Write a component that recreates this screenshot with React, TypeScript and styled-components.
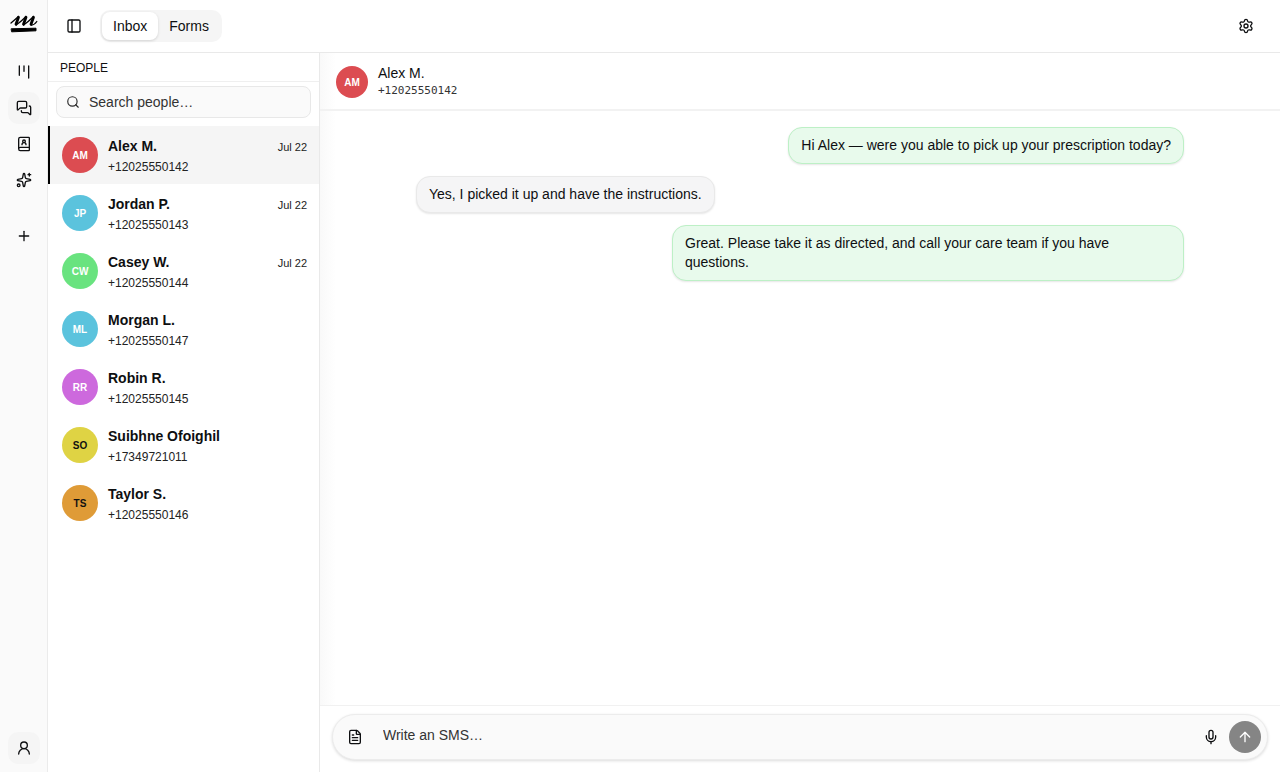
import React from "react";
import styled, { createGlobalStyle } from "styled-components";
import { ArrowUp, BookUser, FileText, Kanban, MessagesSquare, Mic, PanelLeft, Plus, Search, Settings, Sparkles, UserRound } from "lucide-react";

const GlobalStyle = createGlobalStyle`
  *, *::before, *::after { box-sizing: border-box; }
  body { margin: 0; font-family: "Liberation Sans", Arial, sans-serif; font-size: 14px; line-height: 20px; color: #0e0f11; background: #fff; }
  h1, h2, p, ul { margin: 0; padding: 0; }
  button, input { font: inherit; color: inherit; }
  button { border: 0; padding: 0; background: none; cursor: pointer; }
`;

const Shell = styled.div`
  display: flex;
  height: 100vh;
`;

const Rail = styled.nav`
  flex: none;
  display: flex;
  flex-direction: column;
  align-items: center;
  gap: 4px;
  width: 48px;
  padding: 8px 0;
  background: #fafafa;
  border-right: 1px solid #ebebeb;
`;

const Brand = styled.a`
  display: grid;
  place-items: center;
  height: 32px;
  margin-bottom: 12px;
  color: #000;
`;

const IconButton = styled.button<{ $active?: boolean }>`
  flex: none;
  display: grid;
  place-items: center;
  width: 32px;
  height: 32px;
  border-radius: 10px;
  background: ${(p) => (p.$active ? "#f5f5f5" : "transparent")};
`;

const RailGap = styled.div<{ $grow?: boolean }>`
  flex: ${(p) => (p.$grow ? "1" : "none")};
  height: 16px;
`;

const Main = styled.div`
  flex: 1;
  min-width: 0;
  display: flex;
  flex-direction: column;
`;

const TopBar = styled.header`
  flex: none;
  display: flex;
  align-items: center;
  height: 53px;
  padding: 0 18px 0 10px;
  border-bottom: 1px solid #e9e9e9;
`;

const Tabs = styled.div`
  display: flex;
  margin: 0 auto 0 10px;
  padding: 2px;
  border-radius: 10px;
  background: #f5f5f5;
`;

const Tab = styled.button<{ $active?: boolean }>`
  height: 28px;
  padding: 0 11px;
  border-radius: 8px;
  background: ${(p) => (p.$active ? "#fff" : "transparent")};
  box-shadow: ${(p) => (p.$active ? "0 1px 3px rgba(0, 0, 0, 0.14)" : "none")};
`;

const Body = styled.div`
  flex: 1;
  min-height: 0;
  display: flex;
`;

const People = styled.aside`
  flex: none;
  width: 272px;
  border-right: 1px solid #e9e9e9;
`;

const PeopleTitle = styled.h2`
  height: 29px;
  padding: 0 12px;
  font-size: 12px;
  line-height: 30px;
  font-weight: 500;
  color: #111;
  border-bottom: 1px solid #efefef;
`;

const SearchBox = styled.label`
  display: flex;
  align-items: center;
  gap: 9px;
  height: 32px;
  margin: 4px 8px 8px;
  padding: 0 9px;
  border: 1px solid #e8e8e8;
  border-radius: 8px;
  background: #fafafa;
  color: #2b2b2b;
`;

const TextInput = styled.input`
  flex: 1;
  min-width: 0;
  padding: 0;
  border: 0;
  outline: 0;
  background: transparent;
  &::placeholder { color: #333; opacity: 1; }
`;

const PersonList = styled.ul`
  list-style: none;
`;

const Person = styled.button<{ $active?: boolean }>`
  display: flex;
  align-items: center;
  gap: 10px;
  width: 100%;
  height: 58px;
  padding: 0 12px;
  text-align: left;
  border-left: 2px solid ${(p) => (p.$active ? "#000" : "transparent")};
  background: ${(p) => (p.$active ? "#f5f5f5" : "transparent")};
`;

const Avatar = styled.span<{ $color: string; $dark?: boolean; $size: number }>`
  flex: none;
  display: grid;
  place-items: center;
  width: ${(p) => p.$size}px;
  height: ${(p) => p.$size}px;
  padding-top: 2px;
  border-radius: 50%;
  font-size: 10px;
  line-height: 12px;
  font-weight: 700;
  background: ${(p) => p.$color};
  color: ${(p) => (p.$dark ? "#111" : "#fff")};
`;

const PersonText = styled.span`
  flex: 1;
  min-width: 0;
  padding-top: 2px;
`;

const PersonTop = styled.span`
  display: flex;
  align-items: baseline;
  justify-content: space-between;
  height: 22px;
  line-height: 22px;
`;

const PersonName = styled.span`
  font-weight: 700;
`;

const PersonDate = styled.time`
  font-size: 11px;
  color: #222;
`;

const PersonPhone = styled.span`
  display: block;
  font-size: 12px;
  line-height: 20px;
  color: #222;
`;

const Chat = styled.section`
  flex: 1;
  min-width: 0;
  display: flex;
  flex-direction: column;
  background: linear-gradient(to right, #f9f9f9, #fff 16px);
`;

const ChatHeader = styled.header`
  flex: none;
  display: flex;
  align-items: center;
  gap: 10px;
  height: 58px;
  padding: 2px 16px 0;
  border-bottom: 2px solid #f2f2f2;
`;

const ChatName = styled.h1`
  font-size: 14px;
  line-height: 18px;
  font-weight: 500;
`;

const ChatPhone = styled.p`
  font-family: "DejaVu Sans Mono", monospace;
  font-size: 11px;
  line-height: 18px;
  color: #333;
`;

const Thread = styled.div`
  flex: 1;
  min-height: 0;
  overflow: auto;
  display: flex;
  flex-direction: column;
  gap: 12px;
  padding: 16px 10%;
`;

const Bubble = styled.p<{ $own?: boolean }>`
  align-self: ${(p) => (p.$own ? "flex-end" : "flex-start")};
  max-width: 512px;
  padding: 8px 12px;
  line-height: 19px;
  border: 1px solid ${(p) => (p.$own ? "#bdf0c6" : "#e9e9e9")};
  border-radius: 14px;
  background: ${(p) => (p.$own ? "#e8faec" : "#f5f5f6")};
  box-shadow: 0 1px 2px rgba(0, 0, 0, 0.1);
`;

const Footer = styled.footer`
  flex: none;
  padding: 8px 12px 12px;
  background: #fff;
  border-top: 1px solid #f1f1f1;
`;

const Composer = styled.form`
  display: flex;
  align-items: center;
  height: 46px;
  padding: 0 6px;
  border: 1px solid #ececec;
  border-radius: 23px;
  background: #fafafa;
  box-shadow: 0 1px 3px rgba(0, 0, 0, 0.14);
`;

const MessageInput = styled(TextInput)`
  height: 32px;
  margin: 0 12px;
  padding-bottom: 4px;
`;

const SendButton = styled(IconButton)`
  margin-left: 2px;
  border-radius: 50%;
  background: #858585;
  color: #fff;
`;

const people = [
  { initials: "AM", name: "Alex M.", phone: "+12025550142", date: "Jul 22", color: "#dc4c51" },
  { initials: "JP", name: "Jordan P.", phone: "+12025550143", date: "Jul 22", color: "#5bc3dd" },
  { initials: "CW", name: "Casey W.", phone: "+12025550144", date: "Jul 22", color: "#69e37f" },
  { initials: "ML", name: "Morgan L.", phone: "+12025550147", color: "#5bc3dd" },
  { initials: "RR", name: "Robin R.", phone: "+12025550145", color: "#cd69dd" },
  { initials: "SO", name: "Suibhne Ofoighil", phone: "+17349721011", color: "#dfd344", dark: true },
  { initials: "TS", name: "Taylor S.", phone: "+12025550146", color: "#df9b37", dark: true },
];

const messages = [
  { text: "Hi Alex — were you able to pick up your prescription today?", own: true },
  { text: "Yes, I picked it up and have the instructions.", own: false },
  { text: "Great. Please take it as directed, and call your care team if you have questions.", own: true },
];

const Logo = () => (
  <svg width="28" height="18" viewBox="0 0 28 18" fill="none" stroke="currentColor" strokeLinecap="round" strokeLinejoin="round" aria-hidden="true">
    <path d="M8.500 2.200 6 9.300M16 2.200 13.500 9.300M23.500 2.200 21 9.300" strokeWidth="2.800" />
    <path d="M1 8Q4 5.500 8.500 1.500M6 10Q10 7.500 16 1.500M13.500 10Q17.500 7.500 23.500 1.500M21 10Q24 10.500 26.800 6.500" strokeWidth="1.300" />
    <path d="M1.500 13.800 26 13.200V15.800L2 16.800Z" fill="currentColor" strokeWidth="1" strokeLinejoin="miter" />
  </svg>
);

export default function App() {
  return (
    <>
      <GlobalStyle />
      <Shell>
        <Rail aria-label="Main">
          <Brand href="#" aria-label="Home"><Logo /></Brand>
          <IconButton aria-label="Board"><Kanban size={16} /></IconButton>
          <IconButton $active aria-label="Messages"><MessagesSquare size={16} /></IconButton>
          <IconButton aria-label="Contacts"><BookUser size={16} /></IconButton>
          <IconButton aria-label="Assistant"><Sparkles size={16} /></IconButton>
          <RailGap />
          <IconButton aria-label="Add"><Plus size={16} /></IconButton>
          <RailGap $grow />
          <IconButton $active aria-label="Account"><UserRound size={16} /></IconButton>
        </Rail>
        <Main>
          <TopBar>
            <IconButton aria-label="Toggle sidebar"><PanelLeft size={16} /></IconButton>
            <Tabs role="tablist">
              <Tab $active role="tab" aria-selected="true">Inbox</Tab>
              <Tab role="tab" aria-selected="false">Forms</Tab>
            </Tabs>
            <IconButton aria-label="Settings"><Settings size={16} /></IconButton>
          </TopBar>
          <Body>
            <People>
              <PeopleTitle>PEOPLE</PeopleTitle>
              <SearchBox>
                <Search size={14} />
                <TextInput type="search" aria-label="Search people" placeholder="Search people…" />
              </SearchBox>
              <PersonList>
                {people.map((p, i) => (
                  <li key={p.phone}>
                    <Person $active={i === 0}>
                      <Avatar $size={36} $color={p.color} $dark={p.dark}>{p.initials}</Avatar>
                      <PersonText>
                        <PersonTop>
                          <PersonName>{p.name}</PersonName>
                          {p.date && <PersonDate>{p.date}</PersonDate>}
                        </PersonTop>
                        <PersonPhone>{p.phone}</PersonPhone>
                      </PersonText>
                    </Person>
                  </li>
                ))}
              </PersonList>
            </People>
            <Chat>
              <ChatHeader>
                <Avatar $size={32} $color="#dc4c51">AM</Avatar>
                <div>
                  <ChatName>Alex M.</ChatName>
                  <ChatPhone>+12025550142</ChatPhone>
                </div>
              </ChatHeader>
              <Thread>
                {messages.map((m) => (
                  <Bubble key={m.text} $own={m.own}>{m.text}</Bubble>
                ))}
              </Thread>
              <Footer>
                <Composer onSubmit={(e) => e.preventDefault()}>
                  <IconButton type="button" aria-label="Templates"><FileText size={16} /></IconButton>
                  <MessageInput aria-label="Message" placeholder="Write an SMS…" />
                  <IconButton type="button" aria-label="Dictate"><Mic size={16} /></IconButton>
                  <SendButton type="submit" aria-label="Send"><ArrowUp size={16} /></SendButton>
                </Composer>
              </Footer>
            </Chat>
          </Body>
        </Main>
      </Shell>
    </>
  );
}
